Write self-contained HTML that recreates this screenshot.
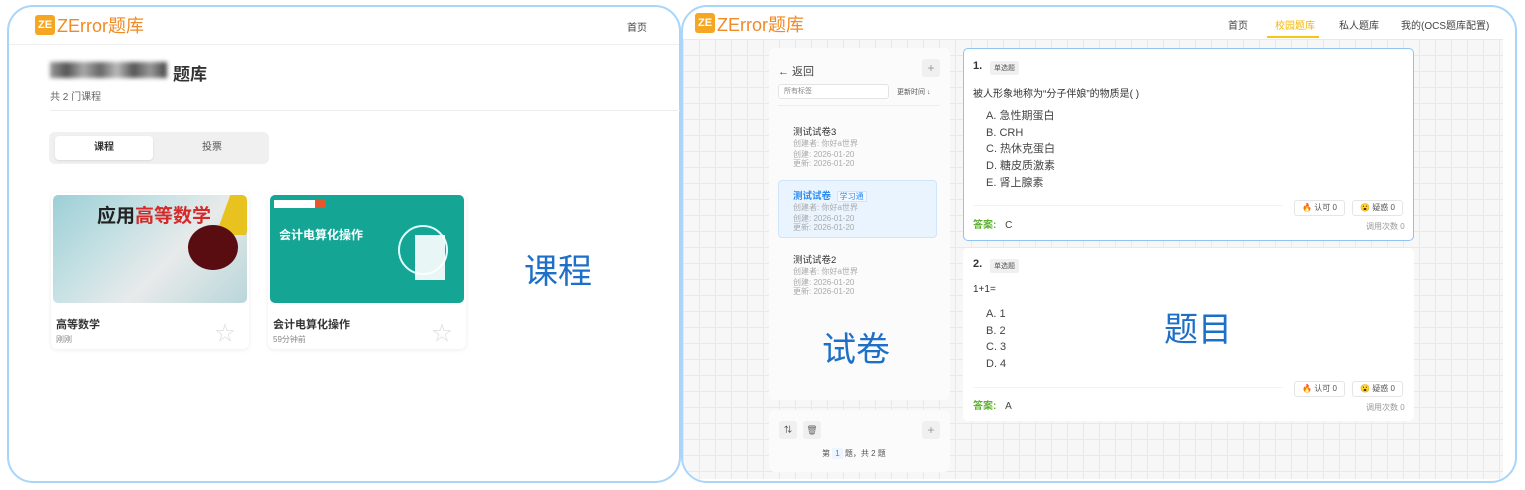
<!DOCTYPE html>
<html><head><meta charset="utf-8"><style>
*{box-sizing:border-box;margin:0;padding:0}
body{width:1525px;height:490px;background:#fff;font-family:"Liberation Sans","Noto Sans CJK SC",sans-serif;position:relative;overflow:hidden;color:#333}
.a{position:absolute}
.logo{width:20px;height:20px;background:#f5a623;border-radius:3px;color:#fff;font-weight:bold;font-size:11px;text-align:center;line-height:20px}
.brand{color:#f08a24;font-size:18px}
.nav{font-size:10px;color:#444}
.card{background:#fff;border-radius:6px;box-shadow:0 1px 4px rgba(0,0,0,.08)}
.sm{font-size:8px;color:#aaa}
.opt{font-size:11px;color:#444;line-height:16.7px}
.btn{border:1px solid #e5e5e5;border-radius:3px;font-size:8px;color:#555;height:16px;line-height:14px;text-align:center;background:#fff}
.tag{background:#f0f0f0;font-size:7px;color:#555;border-radius:2px;padding:2px 4px}
.big{color:#1e6fc8;font-size:34px;font-family:"WenQuanYi Zen Hei","Noto Sans CJK SC",sans-serif}
</style></head><body>
<!-- LEFT PANEL -->
<div class="a" style="left:7px;top:5px;width:674px;height:478px;border:2px solid #a9d5fa;border-radius:26px;background:#fff"></div>
<div class="a logo" style="left:35px;top:15px">ZE</div>
<div class="a brand" style="left:57px;top:12px">ZError题库</div>
<div class="a nav" style="left:627px;top:19px">首页</div>
<div class="a" style="left:9px;top:44px;width:670px;height:1px;background:#eee"></div>
<div class="a" style="left:50px;top:62px;width:117px;height:16px;background:linear-gradient(90deg,#999,#555,#aaa,#666,#bbb,#555,#999,#444);filter:blur(2px)"></div>
<div class="a" style="left:173px;top:60px;font-size:17px;font-weight:bold;color:#333">题库</div>
<div class="a" style="left:50px;top:88px;font-size:10px;color:#666">共 2 门课程</div>
<div class="a" style="left:50px;top:110px;width:630px;height:1px;background:#eee"></div>
<div class="a" style="left:49px;top:132px;width:220px;height:32px;background:#f0f0f0;border-radius:6px"></div>
<div class="a" style="left:55px;top:136px;width:98px;height:24px;background:#fff;border-radius:4px;box-shadow:0 1px 2px rgba(0,0,0,.1);font-size:10px;font-weight:bold;text-align:center;line-height:24px">课程</div>
<div class="a" style="left:163px;top:136px;width:98px;height:24px;font-size:10px;text-align:center;line-height:24px;color:#555">投票</div>
<div class="a card" style="left:51px;top:193px;width:198px;height:156px"></div>
<div class="a" style="left:53px;top:195px;width:194px;height:108px;border-radius:5px;background:linear-gradient(135deg,#9ccfd6 0%,#c7e1e4 35%,#e8eaea 60%,#b9d6da 100%);overflow:hidden">
<div class="a" style="left:44px;top:6px;font-size:19px;font-weight:bold;color:#222">应用<span style="color:#d42a2a">高等数学</span></div>
<div class="a" style="left:170px;top:0;width:30px;height:40px;background:#e8c21f;transform:skewX(-20deg)"></div>
<div class="a" style="left:135px;top:30px;width:50px;height:45px;border-radius:50%;background:#5a0d10"></div>
</div>
<div class="a" style="left:56px;top:316px;font-size:11px;font-weight:bold">高等数学</div>
<div class="a" style="left:56px;top:334px;font-size:8px;color:#888">刚刚</div>
<div class="a" style="left:215px;top:317px;font-size:20px;color:#ddd">☆</div>
<div class="a card" style="left:268px;top:193px;width:198px;height:156px"></div>
<div class="a" style="left:270px;top:195px;width:194px;height:108px;border-radius:5px;background:#14a595;overflow:hidden">
<div class="a" style="left:4px;top:5px;width:52px;height:8px;background:#fff"></div>
<div class="a" style="left:45px;top:5px;width:11px;height:8px;background:#e5582b"></div>
<div class="a" style="left:9px;top:31px;font-size:12px;font-weight:bold;color:#fff">会计电算化操作</div>
<div class="a" style="left:128px;top:30px;width:50px;height:50px;border-radius:50%;border:2px solid #dff"></div>
<div class="a" style="left:145px;top:40px;width:30px;height:45px;background:#fff;opacity:.9"></div>
</div>
<div class="a" style="left:273px;top:316px;font-size:11px;font-weight:bold">会计电算化操作</div>
<div class="a" style="left:273px;top:334px;font-size:8px;color:#888">59分钟前</div>
<div class="a" style="left:432px;top:317px;font-size:20px;color:#ddd">☆</div>
<div class="a big" style="left:524px;top:244px">课程</div>

<!-- RIGHT PANEL -->
<div class="a" style="left:681px;top:5px;width:836px;height:478px;border:2px solid #a9d5fa;border-radius:26px;background:#fff;overflow:hidden">
<div class="a" style="left:0;top:32px;width:820px;height:440px;background-color:#f7f7f7;background-image:linear-gradient(#e9e9e9 1px,transparent 1px),linear-gradient(90deg,#e9e9e9 1px,transparent 1px);background-size:16px 16px"></div>
</div>
<div class="a logo" style="left:695px;top:13px">ZE</div>
<div class="a brand" style="left:717px;top:11px">ZError题库</div>
<div class="a nav" style="left:1228px;top:17px">首页</div>
<div class="a nav" style="left:1275px;top:17px;color:#f5b800">校园题库</div>
<div class="a" style="left:1267px;top:36px;width:52px;height:2px;background:#f5c518"></div>
<div class="a nav" style="left:1339px;top:17px">私人题库</div>
<div class="a nav" style="left:1401px;top:17px">我的(OCS题库配置)</div>

<div class="a" style="left:769px;top:48px;width:181px;height:352px;background:#fbfbfb;border-radius:6px"></div>
<div class="a" style="left:778px;top:63px;font-size:11px;color:#444">← 返回</div>
<div class="a" style="left:922px;top:59px;width:18px;height:18px;background:#f0f0f0;border-radius:3px;text-align:center;line-height:18px;color:#999;font-size:12px">+</div>
<div class="a" style="left:778px;top:84px;width:111px;height:15px;border:1px solid #e4e4e4;border-radius:3px;background:#fff;font-size:7px;color:#888;padding-left:5px;line-height:13px">所有标签</div>
<div class="a" style="left:897px;top:87px;font-size:7px;color:#555">更新时间 ↓</div>
<div class="a" style="left:778px;top:105px;width:162px;height:1px;background:#eee"></div>
<div class="a" style="left:793px;top:124px;font-size:9.5px;color:#333">测试试卷3</div>
<div class="a sm" style="left:793px;top:138px">创建者: 你好a世界</div>
<div class="a sm" style="left:793px;top:150px;line-height:9px">创建: 2026-01-20<br>更新: 2026-01-20</div>
<div class="a" style="left:778px;top:180px;width:159px;height:58px;background:#e9f4ff;border:1px solid #cfe5fb;border-radius:4px"></div>
<div class="a" style="left:793px;top:188px;font-size:9.5px;color:#2d8cf0;font-weight:bold">测试试卷 <span style="font-weight:normal;font-size:8px;border:1px solid #cfe5fb;background:#f3f9ff;padding:0 2px;margin-left:3px">学习通</span></div>
<div class="a sm" style="left:793px;top:202px">创建者: 你好a世界</div>
<div class="a sm" style="left:793px;top:214px;line-height:9px">创建: 2026-01-20<br>更新: 2026-01-20</div>
<div class="a" style="left:793px;top:252px;font-size:9.5px;color:#333">测试试卷2</div>
<div class="a sm" style="left:793px;top:266px">创建者: 你好a世界</div>
<div class="a sm" style="left:793px;top:278px;line-height:9px">创建: 2026-01-20<br>更新: 2026-01-20</div>
<div class="a big" style="left:822px;top:322px">试卷</div>

<div class="a" style="left:769px;top:410px;width:181px;height:62px;background:#fbfbfb;border-radius:6px"></div>
<div class="a" style="left:779px;top:421px;width:18px;height:18px;background:#f0f0f0;border-radius:3px;font-size:8px;text-align:center;line-height:18px">⇅</div>
<div class="a" style="left:803px;top:421px;width:18px;height:18px;background:#f0f0f0;border-radius:3px;font-size:9px;text-align:center;line-height:18px;color:#666">🗑</div>
<div class="a" style="left:922px;top:421px;width:18px;height:18px;background:#f0f0f0;border-radius:3px;text-align:center;line-height:18px;color:#999;font-size:12px">+</div>
<div class="a" style="left:822px;top:448px;font-size:8px;color:#555">第 <span style="background:#eef5ff;color:#2d8cf0;padding:1px 3px">1</span> 题，共 2 题</div>

<div class="a" style="left:963px;top:48px;width:451px;height:193px;background:#fff;border:1px solid #8fc3f2;border-radius:5px"></div>
<div class="a" style="left:973px;top:60px;font-size:11px;font-weight:bold">1.</div>
<div class="a tag" style="left:990px;top:61px">单选题</div>
<div class="a" style="left:973px;top:85px;font-size:10px">被人形象地称为“分子伴娘”的物质是( )</div>
<div class="a opt" style="left:986px;top:108px">A. 急性期蛋白<br>B. CRH<br>C. 热休克蛋白<br>D. 糖皮质激素<br>E. 肾上腺素</div>
<div class="a" style="left:973px;top:205px;width:310px;height:1px;background:#f2f2f2"></div>
<div class="a btn" style="left:1294px;top:200px;width:51px">🔥 认可 0</div>
<div class="a btn" style="left:1352px;top:200px;width:51px">😮 疑惑 0</div>
<div class="a" style="left:973px;top:216px;font-size:10px;color:#5bb02e;font-weight:bold">答案: <span style="color:#444;font-weight:normal;margin-left:6px">C</span></div>
<div class="a sm" style="left:1366px;top:221px;color:#999">调用次数 0</div>

<div class="a" style="left:963px;top:248px;width:451px;height:173px;background:#fff;border-radius:5px"></div>
<div class="a" style="left:973px;top:258px;font-size:11px;font-weight:bold">2.</div>
<div class="a tag" style="left:990px;top:259px">单选题</div>
<div class="a" style="left:973px;top:284px;font-size:10px">1+1=</div>
<div class="a opt" style="left:986px;top:306px">A. 1<br>B. 2<br>C. 3<br>D. 4</div>
<div class="a big" style="left:1164px;top:302px">题目</div>
<div class="a" style="left:973px;top:387px;width:310px;height:1px;background:#f2f2f2"></div>
<div class="a btn" style="left:1294px;top:381px;width:51px">🔥 认可 0</div>
<div class="a btn" style="left:1352px;top:381px;width:51px">😮 疑惑 0</div>
<div class="a" style="left:973px;top:397px;font-size:10px;color:#5bb02e;font-weight:bold">答案: <span style="color:#444;font-weight:normal;margin-left:6px">A</span></div>
<div class="a sm" style="left:1366px;top:402px;color:#999">调用次数 0</div>
</body></html>
